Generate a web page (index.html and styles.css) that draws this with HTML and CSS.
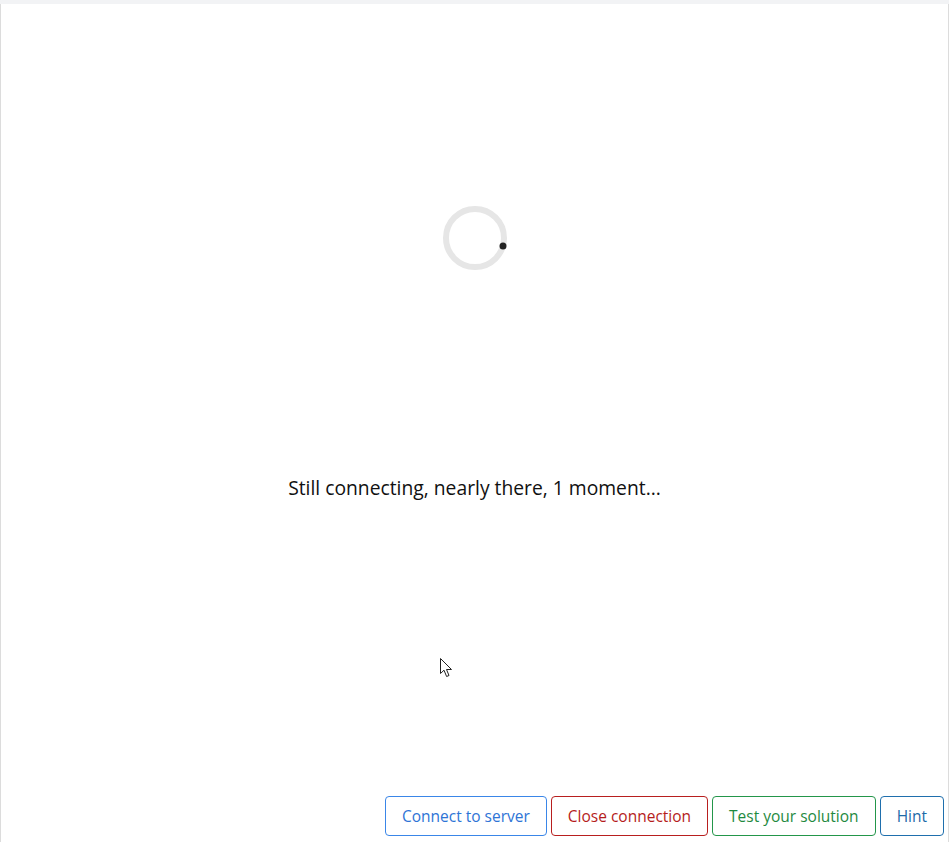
FILE: index.html
```html
<!DOCTYPE html>
<html lang="en">
<head>
  <meta charset="UTF-8">
  <meta name="viewport" content="width=device-width, initial-scale=1.0">
  <title>Connecting</title>
  <link rel="stylesheet" href="styles.css">
</head>
<body>
  <div class="frame">
    <div class="stage">
      <div class="spinner">
        <svg width="68" height="68" viewBox="0 0 68 68">
          <circle cx="34" cy="34" r="29" fill="none" stroke="#e6e6e6" stroke-width="6"/>
          <circle cx="62" cy="42" r="3.5" fill="#222"/>
        </svg>
      </div>
      <p class="message">Still connecting, nearly there, 1 moment...</p>
    </div>

    <div class="actions">
      <button class="btn btn-connect">Connect to server</button>
      <button class="btn btn-close">Close connection</button>
      <button class="btn btn-test">Test your solution</button>
      <button class="btn btn-hint">Hint</button>
    </div>

    <!-- pointeur de souris -->
    <svg class="cursor" width="14" height="21" viewBox="0 0 14 21">
      <path d="M0.5 0.5 L0.5 15.5 L4 12.2 L6.6 18.5 L9 17.5 L6.5 11.5 L11.5 11.5 Z" fill="#fff" stroke="#222" stroke-width="1"/>
    </svg>
  </div>
</body>
</html>
```

FILE: styles.css
```css
body { margin: 0; background-color: #f2f3f5; font-family: "Open Sans", "Noto Sans", sans-serif; }
.frame { position: relative; margin-top: 4px; height: 838px; background-color: #fff; border-left: 1px solid #dcdcdc; border-right: 1px solid #dcdcdc; box-sizing: border-box; display: flex; flex-direction: column; }
.stage { flex: 1; display: flex; flex-direction: column; align-items: center; }
.spinner { margin-top: 200px; margin-left: 1px; height: 68px; }
.message { margin: 202px 0 0; font-size: 19.3px; font-weight: 500; color: #111; }
.actions { display: flex; justify-content: flex-end; gap: 4px; padding: 0 4px 6px 0; }
.btn { height: 40px; padding: 0 16px; font-family: inherit; font-size: 15.5px; font-weight: 500; background-color: #fff; border: 1px solid; border-radius: 4px; cursor: pointer; }
.btn-connect { color: #2e74d6; border-color: #3a86e8; }
.btn-close { color: #b51c1c; border-color: #b81f1f; }
.btn-test { color: #1f8a3f; border-color: #23964a; }
.btn-hint { color: #1d6aa8; border-color: #1f6fad; }
.cursor { position: absolute; left: 439px; top: 654px; }
```
